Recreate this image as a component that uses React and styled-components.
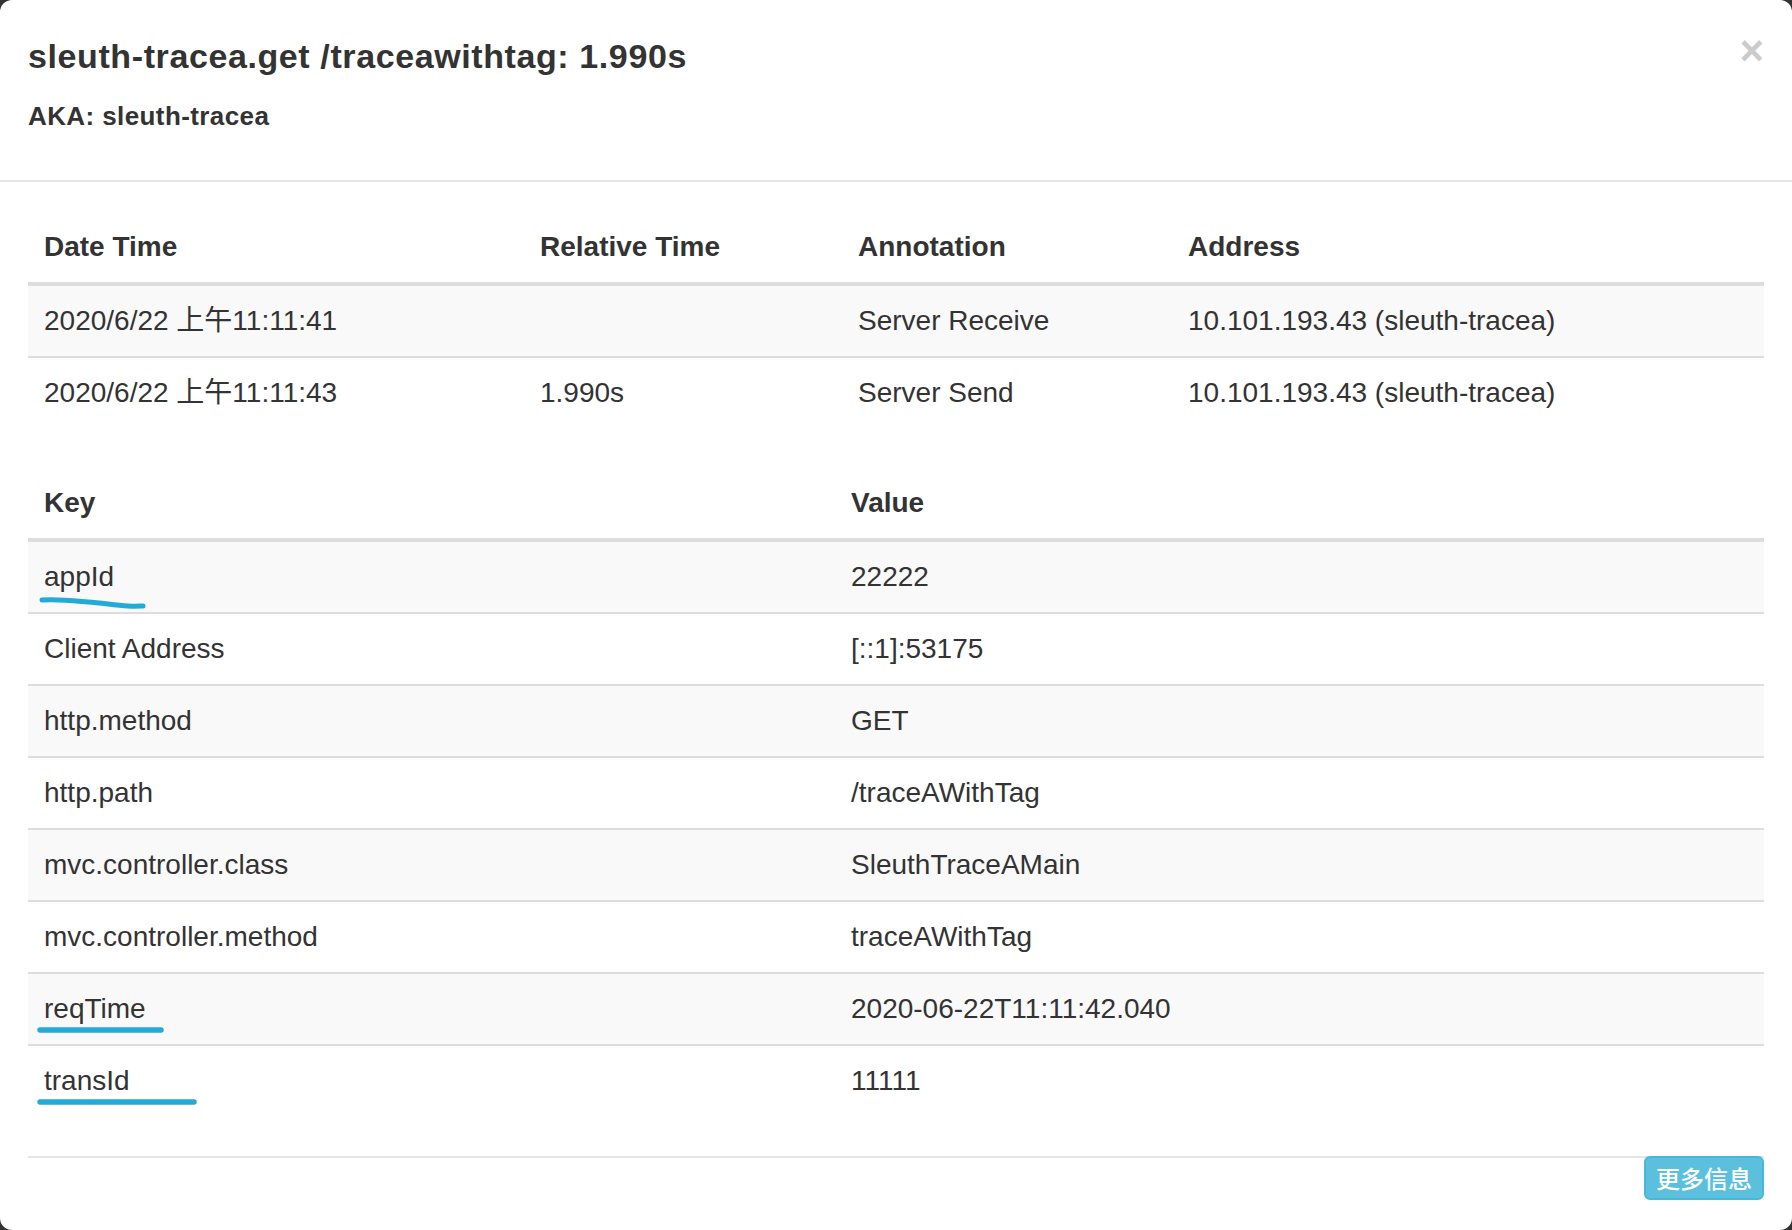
import React from 'react';
import styled, { createGlobalStyle } from 'styled-components';

const GlobalStyle = createGlobalStyle`
  html, body {
    margin: 0;
    padding: 0;
    background: #333;
  }
  body {
    font-family: "Liberation Sans", Arial, "Noto Sans CJK SC", sans-serif;
    color: #333;
  }
`;

const Modal = styled.div`
  width: 1792px;
  height: 1230px;
  box-sizing: border-box;
  background: #fff;
  border-radius: 12px;
  overflow: hidden;
  display: flex;
  flex-direction: column;
`;

const Header = styled.div`
  display: flex;
  justify-content: space-between;
  align-items: flex-start;
  padding: 28px 28px 46px 28px;
  border-bottom: 2px solid #e5e5e5;
`;

const Title = styled.h4`
  margin: 0;
  font-size: 34px;
  line-height: 56px;
  font-weight: bold;
  letter-spacing: 0.6px;
  color: #333;
`;

const Aka = styled.h5`
  margin: 14px 0 0;
  font-size: 26px;
  line-height: 36px;
  font-weight: bold;
  letter-spacing: 0.4px;
  color: #333;
`;

const Close = styled.button`
  border: 0;
  background: transparent;
  padding: 0;
  margin-top: 8px;
  font-family: "Liberation Sans", Arial, sans-serif;
  font-size: 42px;
  line-height: 30px;
  font-weight: bold;
  color: #000;
  opacity: 0.2;
  cursor: pointer;
`;

const Body = styled.div`
  padding: 30px 28px 0;
`;

const Table = styled.table`
  width: 100%;
  border-collapse: collapse;
  border-spacing: 0;
  table-layout: fixed;
  margin-bottom: 40px;
  font-size: 28px;
`;

const Th = styled.th`
  width: ${(p) => p.$width || 'auto'};
  text-align: left;
  padding: 16px;
  line-height: 38px;
  font-weight: bold;
  vertical-align: bottom;
  border-bottom: 4px solid #ddd;
`;

const Row = styled.tr`
  background: ${(p) => (p.$striped ? '#f9f9f9' : '#fff')};
`;

const Td = styled.td`
  padding: 16px;
  line-height: 38px;
  vertical-align: top;
  border-top: 2px solid #ddd;
  white-space: nowrap;
  font-family: "Liberation Sans", Arial, "Noto Sans CJK SC", sans-serif;
`;

const Marked = styled.span`
  position: relative;
  display: inline-block;
`;

const Scribble = styled.svg`
  position: absolute;
  left: ${(p) => p.$left}px;
  top: ${(p) => p.$top}px;
  overflow: visible;
  pointer-events: none;
`;

const Footer = styled.div`
  margin: 0 28px;
  border-top: 2px solid #e5e5e5;
  display: flex;
  justify-content: flex-end;
`;

const InfoButton = styled.button`
  margin-top: -2px;
  padding: 2px 10px;
  font-family: "Noto Sans CJK SC", sans-serif;
  font-size: 24px;
  line-height: 36px;
  font-weight: 500;
  color: #fff;
  background: #5bc0de;
  border: 2px solid #46b8da;
  border-radius: 6px;
  cursor: pointer;
`;

const annotations = [
  { time: '2020/6/22 上午11:11:41', relative: '', value: 'Server Receive', address: '10.101.193.43 (sleuth-tracea)' },
  { time: '2020/6/22 上午11:11:43', relative: '1.990s', value: 'Server Send', address: '10.101.193.43 (sleuth-tracea)' },
];

const tags = [
  { key: 'appId', value: '22222', mark: 'wave' },
  { key: 'Client Address', value: '[::1]:53175' },
  { key: 'http.method', value: 'GET' },
  { key: 'http.path', value: '/traceAWithTag' },
  { key: 'mvc.controller.class', value: 'SleuthTraceAMain' },
  { key: 'mvc.controller.method', value: 'traceAWithTag' },
  { key: 'reqTime', value: '2020-06-22T11:11:42.040', mark: 'line', length: 127 },
  { key: 'transId', value: '11111', mark: 'line', length: 160 },
];

// hand-drawn blue underlines from the screenshot
const Underline = ({ mark, length }) => {
  if (mark === 'wave') {
    return (
      <Scribble $left={-4} $top={39} width="106" height="12">
        <path
          d="M2 3 C 20 2, 36 4, 48 5 C 62 6, 74 8, 88 9 C 96 9.5, 100 9, 103 9"
          fill="none"
          stroke="#22aad8"
          strokeWidth="5"
          strokeLinecap="round"
        />
      </Scribble>
    );
  }
  return (
    <Scribble $left={-7} $top={36} width={length} height="8">
      <line x1="3" y1="4" x2={length - 3} y2="4" stroke="#22aad8" strokeWidth="5.5" strokeLinecap="round" />
    </Scribble>
  );
};

const App = () => {
  return (
    <>
      <GlobalStyle />
      <Modal>
        <Header>
          <div>
            <Title>sleuth-tracea.get /traceawithtag: 1.990s</Title>
            <Aka>AKA: sleuth-tracea</Aka>
          </div>
          <Close>×</Close>
        </Header>
        <Body>
          <Table>
            <thead>
              <tr>
                <Th $width="464px">Date Time</Th>
                <Th $width="286px">Relative Time</Th>
                <Th $width="298px">Annotation</Th>
                <Th>Address</Th>
              </tr>
            </thead>
            <tbody>
              {annotations.map((a, i) => (
                <Row key={a.time} $striped={i % 2 === 0}>
                  <Td>{a.time}</Td>
                  <Td>{a.relative}</Td>
                  <Td>{a.value}</Td>
                  <Td>{a.address}</Td>
                </Row>
              ))}
            </tbody>
          </Table>
          <Table>
            <thead>
              <tr>
                <Th $width="775px">Key</Th>
                <Th>Value</Th>
              </tr>
            </thead>
            <tbody>
              {tags.map((t, i) => (
                <Row key={t.key} $striped={i % 2 === 0}>
                  <Td>
                    {t.mark ? (
                      <Marked>
                        {t.key}
                        <Underline mark={t.mark} length={t.length} />
                      </Marked>
                    ) : (
                      t.key
                    )}
                  </Td>
                  <Td>{t.value}</Td>
                </Row>
              ))}
            </tbody>
          </Table>
        </Body>
        <Footer>
          <InfoButton>更多信息</InfoButton>
        </Footer>
      </Modal>
    </>
  );
};

export default App;
